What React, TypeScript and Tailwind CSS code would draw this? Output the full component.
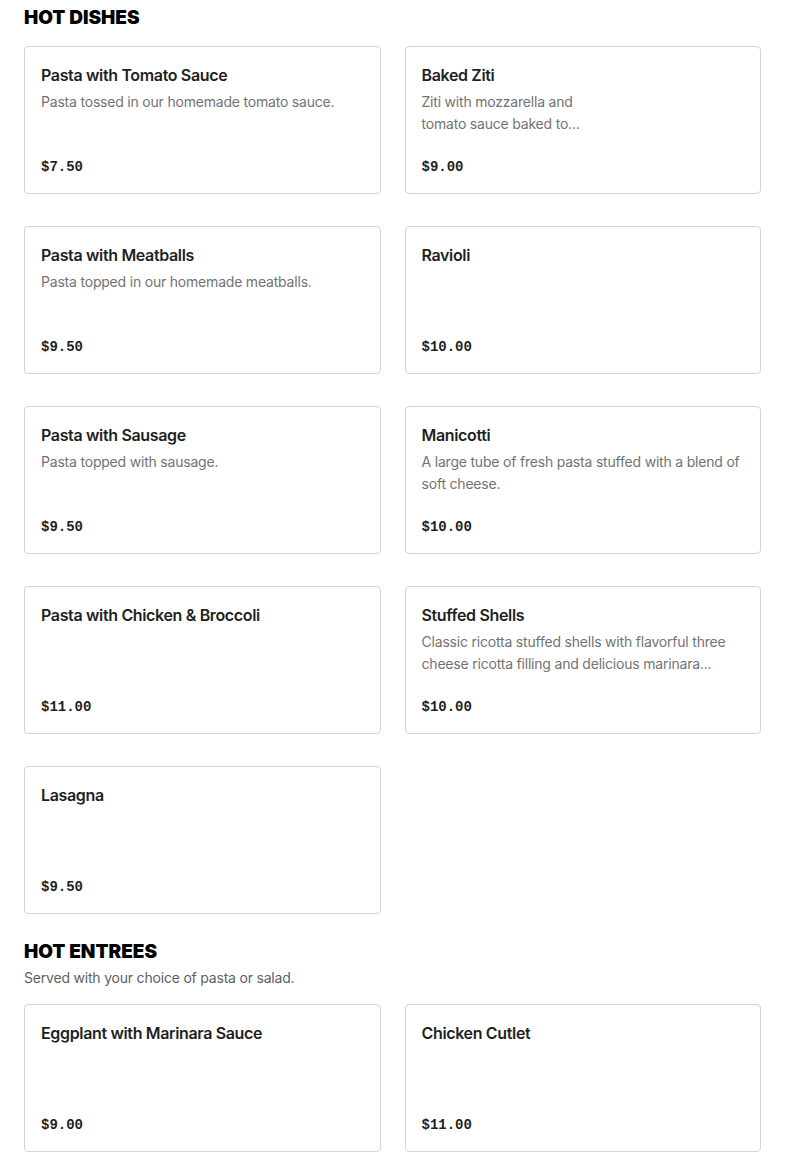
const hotDishes = [
  { name: "Pasta with Tomato Sauce", desc: ["Pasta tossed in our homemade tomato sauce."], price: "$7.50" },
  { name: "Baked Ziti", desc: ["Ziti with mozzarella and", "tomato sauce baked to..."], price: "$9.00" },
  { name: "Pasta with Meatballs", desc: ["Pasta topped in our homemade meatballs."], price: "$9.50" },
  { name: "Ravioli", desc: [], price: "$10.00" },
  { name: "Pasta with Sausage", desc: ["Pasta topped with sausage."], price: "$9.50" },
  { name: "Manicotti", desc: ["A large tube of fresh pasta stuffed with a blend of", "soft cheese."], price: "$10.00" },
  { name: "Pasta with Chicken & Broccoli", desc: [], price: "$11.00" },
  { name: "Stuffed Shells", desc: ["Classic ricotta stuffed shells with flavorful three", "cheese ricotta filling and delicious marinara..."], price: "$10.00" },
  { name: "Lasagna", desc: [], price: "$9.50" },
];

const hotEntrees = [
  { name: "Eggplant with Marinara Sauce", desc: [], price: "$9.00" },
  { name: "Chicken Cutlet", desc: [], price: "$11.00" },
];

type Item = { name: string; desc: string[]; price: string };

function MenuCard({ item }: { item: Item }) {
  return (
    <div className="flex flex-col h-[148px] border border-[#d4d4d4] rounded-[4px] px-4 pt-4 pb-4">
      <h3 className="text-[16px] leading-6 font-semibold text-[#1f1f1f] tracking-[-0.35px]">{item.name}</h3>
      <div className="mt-1 text-[14px] leading-[22px] text-[#737373] tracking-[-0.2px]">
        {item.desc.map((line) => (
          <p key={line} className="whitespace-nowrap">{line}</p>
        ))}
      </div>
      <p className="mt-auto text-[14px] leading-5 font-bold text-[#1f1f1f] font-['Liberation_Mono',monospace]">
        {item.price}
      </p>
    </div>
  );
}

export default function App() {
  return (
    <div className="bg-white min-h-screen px-6 pt-[6px] font-['Inter',sans-serif]">
      <section>
        <h2 className="text-[19px] leading-6 font-black text-black">HOT DISHES</h2>
        <div className="grid grid-cols-2 gap-x-6 gap-y-8 mt-4">
          {hotDishes.map((item) => (
            <MenuCard key={item.name} item={item} />
          ))}
        </div>
      </section>
      <section className="mt-[26px]">
        <h2 className="text-[19px] leading-6 font-black text-black">HOT ENTREES</h2>
        <p className="mt-[4px] text-[14px] leading-5 text-[#5f5f5f] tracking-[-0.2px]">Served with your choice of pasta or salad.</p>
        <div className="grid grid-cols-2 gap-x-6 gap-y-8 mt-[16px]">
          {hotEntrees.map((item) => (
            <MenuCard key={item.name} item={item} />
          ))}
        </div>
      </section>
    </div>
  );
}
